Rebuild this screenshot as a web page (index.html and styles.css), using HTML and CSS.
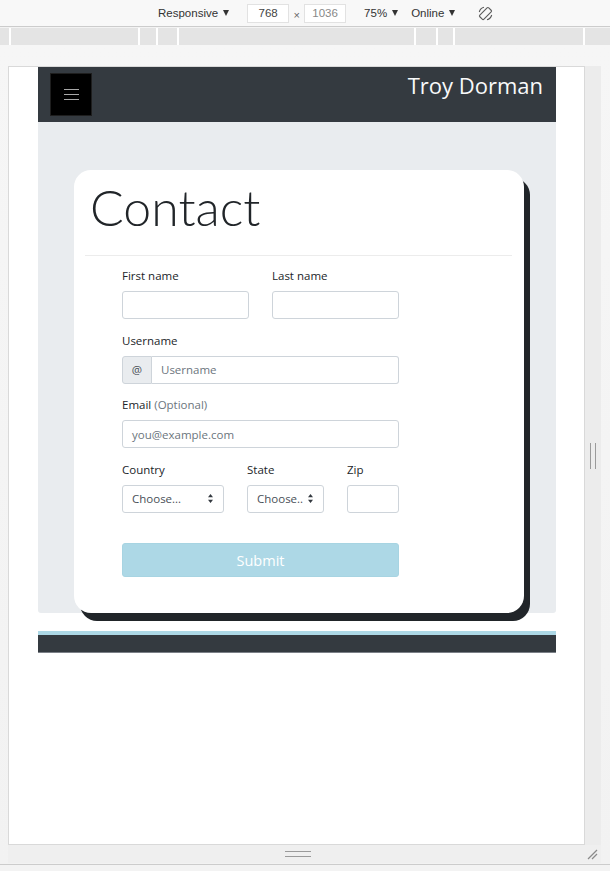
FILE: index.html
```html
<!DOCTYPE html>
<html lang="en">
<head>
<meta charset="utf-8">
<title>Contact - Troy Dorman</title>
<link rel="stylesheet" href="styles.css">
</head>
<body>
<div class="toolbar">
  <span class="tb-item">Responsive<span class="caret"></span></span>
  <span class="dim-box">768</span>
  <span class="times">×</span>
  <span class="dim-box dim-light">1036</span>
  <span class="tb-item zoom">75%<span class="caret"></span></span>
  <span class="tb-item online">Online<span class="caret"></span></span>
  <svg class="rotate" width="15" height="15" viewBox="0 0 15 15"><g fill="none" stroke="#5a5a5a" stroke-width="1.1"><rect x="4.6" y="1.2" width="5.8" height="12.6" rx="1.2" transform="rotate(45 7.5 7.5)"/><path d="M1.3 6 A6.3 6.3 0 0 1 6 1.3"/><path d="M13.7 9 A6.3 6.3 0 0 1 9 13.7"/></g></svg>
</div>
<div class="mq-bar">
  <span class="seg" style="width:9px"></span><span class="sep"></span>
  <span class="seg" style="width:127px"></span><span class="sep"></span>
  <span class="seg" style="width:16px"></span><span class="sep"></span>
  <span class="seg" style="width:19px"></span><span class="sep"></span>
  <span class="seg" style="width:235px"></span><span class="sep"></span>
  <span class="seg" style="width:20px"></span><span class="sep"></span>
  <span class="seg" style="width:15px"></span><span class="sep"></span>
  <span class="seg" style="width:128px"></span><span class="sep"></span>
  <span class="seg grow"></span>
</div>
<div class="stage">
  <div class="stage-row">
    <div class="device">
      <div class="container">
        <nav class="navbar">
          <button class="toggler" type="button" aria-label="Menu">
            <span class="bar"></span><span class="bar"></span><span class="bar"></span>
          </button>
          <span class="brand">Troy Dorman</span>
        </nav>
        <main class="main">
          <section class="card">
            <h1 class="title">Contact</h1>
            <hr class="divider">
            <form class="form">
              <div class="row">
                <div class="field w127">
                  <label class="label">First name</label>
                  <div class="input"></div>
                </div>
                <div class="field w127">
                  <label class="label">Last name</label>
                  <div class="input"></div>
                </div>
              </div>
              <div class="field">
                <label class="label">Username</label>
                <div class="input-group">
                  <span class="prepend">@</span>
                  <div class="input grouped"><span class="ph">Username</span></div>
                </div>
              </div>
              <div class="field">
                <label class="label">Email <span class="muted">(Optional)</span></label>
                <div class="input"><span class="ph">you@example.com</span></div>
              </div>
              <div class="row">
                <div class="field w102">
                  <label class="label">Country</label>
                  <div class="input select"><span class="sel-text">Choose...</span><svg class="arrows" width="5" height="9" viewBox="0 0 5 9"><path d="M2.5 0 L5 3.3 L0 3.3 Z M2.5 9 L5 5.7 L0 5.7 Z" fill="#343a40"/></svg></div>
                </div>
                <div class="field w77">
                  <label class="label">State</label>
                  <div class="input select"><span class="sel-text">Choose..</span><svg class="arrows" width="5" height="9" viewBox="0 0 5 9"><path d="M2.5 0 L5 3.3 L0 3.3 Z M2.5 9 L5 5.7 L0 5.7 Z" fill="#343a40"/></svg></div>
                </div>
                <div class="field w52">
                  <label class="label">Zip</label>
                  <div class="input"></div>
                </div>
              </div>
              <button class="submit" type="button">Submit</button>
            </form>
          </section>
        </main>
        <footer class="site-footer"></footer>
      </div>
    </div>
    <div class="side-strip"><span class="vgrip"></span></div>
  </div>
  <div class="bottom-strip">
    <span class="hgrip"></span>
    <svg class="corner" width="11" height="11" viewBox="0 0 11 11"><g stroke="#8a8a8a" stroke-width="1.3"><path d="M10 1 L1 10"/><path d="M10 5 L5 10"/></g></svg>
  </div>
</div>
<div class="bottom-bar"></div>
</body>
</html>
```
FILE: styles.css
```css
* { box-sizing: border-box; }
html, body { margin: 0; padding: 0; }
body {
  background: #f3f3f3;
  font-family: "Liberation Sans", Arial, sans-serif;
  width: 610px;
  height: 871px;
  overflow: hidden;
}

/* devtools toolbar */
.toolbar {
  height: 27px;
  background: #f8f8f8;
  border-bottom: 1px solid #cccccc;
  display: flex;
  align-items: center;
  padding-left: 158px;
  font-size: 11.5px;
  color: #333;
}
.tb-item { display: inline-flex; align-items: center; }
.caret {
  display: inline-block;
  width: 0; height: 0;
  border-left: 3.5px solid transparent;
  border-right: 3.5px solid transparent;
  border-top: 6px solid #333;
  margin-left: 5px;
}
.dim-box {
  width: 42px; height: 19px;
  margin-left: 18px;
  background: #fff;
  border: 1px solid #e2e2e2;
  display: inline-flex; align-items: center; justify-content: center;
  color: #444;
  font-size: 11.5px;
}
.dim-box.dim-light { margin-left: 0; color: #888; }
.times { width: 15px; text-align: center; color: #666; font-size: 11px; padding-top: 3px; }
.zoom { margin-left: 18px; }
.online { margin-left: 13px; }
.rotate { margin-left: 23px; }

.mq-bar {
  margin-top: 1px;
  height: 17px;
  display: flex;
  background: #f8f8f8;
}
.seg { background: #e4e4e4; height: 100%; }
.seg.grow { flex: 1; }
.sep { width: 2px; background: #ffffff; height: 100%; }

/* stage */
.stage {
  height: 819px;
  padding: 21px 0 0 8px;
  background: linear-gradient(#f6f6f6, #f2f2f2);
}
.stage-row { display: flex; }
.device {
  width: 577px;
  height: 779px;
  background: #fff;
  border: 1px solid #d9d9d9;
  overflow: hidden;
}
.side-strip {
  width: 16px;
  height: 779px;
  background: #ececec;
  display: flex;
  align-items: center;
  justify-content: center;
}
.vgrip {
  width: 6px; height: 26px;
  border-left: 1.5px solid #9a9a9a;
  border-right: 1.5px solid #9a9a9a;
}
.bottom-strip {
  width: 593px;
  height: 18px;
  background: #efefef;
  display: flex;
  align-items: center;
}
.hgrip {
  margin-left: 277px;
  width: 26px; height: 5.5px;
  border-top: 1.5px solid #9a9a9a;
  border-bottom: 1.5px solid #9a9a9a;
}
.corner { margin-left: auto; margin-right: 3px; }
.bottom-bar { border-top: 1px solid #cccccc; height: 8px; background: #f3f3f3; }

/* page inside device */
.container {
  width: 518px;
  margin-left: 29px;
  font-family: "Open Sans", "Noto Sans", sans-serif;
  color: #212529;
}
.navbar {
  height: 55px;
  background: #343a40;
  display: flex;
  justify-content: space-between;
  align-items: flex-start;
  padding: 6px 13px 0 12px;
}
.toggler {
  width: 42px; height: 43px;
  background: #000;
  border: 1px solid #1e1e1e;
  padding: 0;
  display: flex;
  flex-direction: column;
  align-items: center;
  justify-content: center;
  gap: 4px;
}
.bar { display: block; width: 15px; height: 1px; background: #a8a8a8; }
.brand {
  font-size: 22px;
  line-height: 24px;
  color: #f8f9fa;
}
.main {
  background: #e9ecef;
  padding: 48px 0 0 36px;
  border-radius: 0 0 3px 3px;
}
.card {
  width: 450px;
  height: 443px;
  background: #fff;
  border-radius: 17px;
  box-shadow: 6px 8px 0 #212529;
  padding: 7px 12px 0 11px;
}
.title {
  margin: 0 0 0 5px;
  font-family: Lato, "Open Sans", sans-serif;
  font-weight: 300;
  font-size: 50px;
  line-height: 60px;
  color: #212529;
}
.divider {
  margin: 18px 0 0;
  border: 0;
  border-top: 1px solid #ececec;
}
.form {
  width: 277px;
  margin: 11px 0 0 37px;
}
.row { display: flex; gap: 23px; }
.field { margin-bottom: 12.5px; }
.w127 { width: 127px; }
.w102 { width: 102px; }
.w77 { width: 77px; }
.w52 { width: 52px; }
.label {
  display: block;
  font-size: 11.5px;
  line-height: 18px;
  margin-bottom: 6px;
  color: #212529;
}
.muted { color: #6c757d; }
.input {
  height: 28px;
  border: 1px solid #ced4da;
  border-radius: 3px;
  background: #fff;
  display: flex;
  align-items: center;
  padding: 0 9px;
  font-size: 11.5px;
  color: #495057;
}
.ph { color: #6c757d; }
.input-group { display: flex; }
.prepend {
  width: 30px; height: 28px;
  background: #e9ecef;
  border: 1px solid #ced4da;
  border-radius: 3px 0 0 3px;
  display: flex; align-items: center; justify-content: center;
  font-size: 11.5px;
  color: #495057;
}
.input.grouped { flex: 1; border-left: 0; border-radius: 0 3px 3px 0; }
.select { justify-content: space-between; padding-right: 10px; }
.sel-text { white-space: nowrap; overflow: hidden; }
.arrows { flex: none; }
.submit {
  display: block;
  width: 277px;
  height: 34px;
  margin-top: 18px;
  background: #add8e6;
  border: 1px solid #a7d4e2;
  border-radius: 3px;
  color: #fff;
  font-family: "Open Sans", "Noto Sans", sans-serif;
  font-size: 14.5px;
  padding: 0;
}
.site-footer {
  margin-top: 18px;
  height: 22px;
  background: #343a40;
  border-top: 4px solid #add8e6;
  border-bottom: 1px solid #7b8087;
}
```
